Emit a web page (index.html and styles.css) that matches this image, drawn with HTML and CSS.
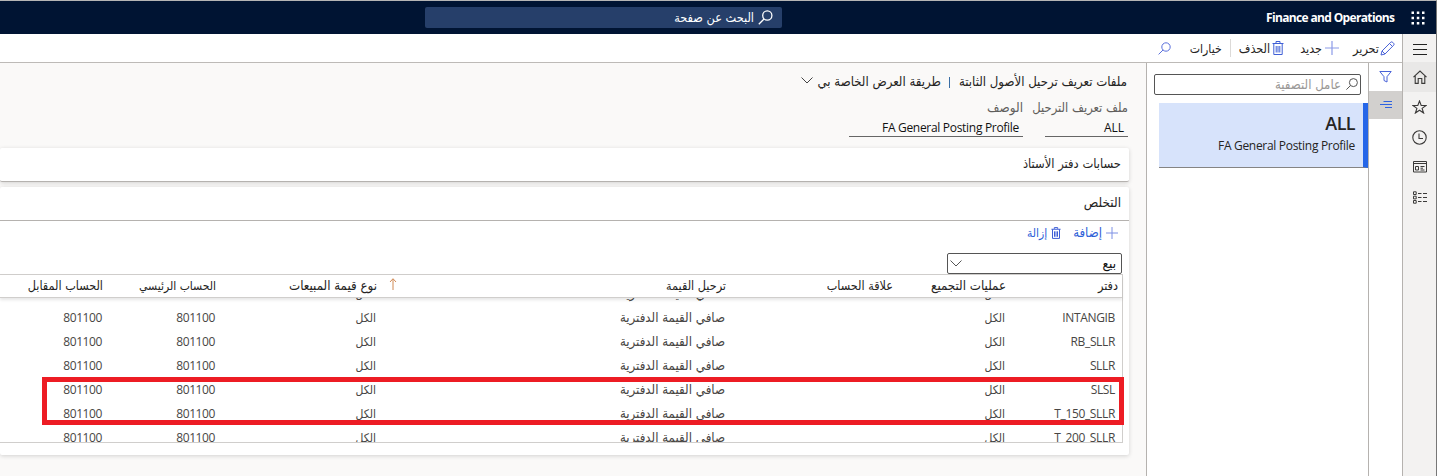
FILE: index.html
```
<!DOCTYPE html>
<html lang="ar" dir="rtl">
<head>
<meta charset="utf-8">
<title>Finance and Operations</title>
<link rel="stylesheet" href="styles.css">
</head>
<body>
<div class="app">
  <header class="topbar">
    <svg class="waffle" width="14" height="14" viewBox="0 0 14 14" fill="#fff"><path d="M.5.5H3V3H.5zM5.800.5h2.500V3H5.800zM11 .5h2.500V3H11zM.5 5.800H3v2.500H.5zM5.800 5.800h2.500v2.500H5.800zM11 5.800h2.500v2.500H11zM.5 11H3v2.500H.5zM5.800 11h2.500v2.500H5.800zM11 11h2.500v2.500H11z"/></svg>
    <span class="brand">Finance and Operations</span>
    <div class="search">
      <svg width="15" height="15" viewBox="0 0 15 15" fill="none" stroke="#fff" stroke-width="1.3"><circle cx="9.3" cy="5.5" r="4.6"/><path d="M6 9L.8 14.2"/></svg>
      <span class="t t-search">البحث عن صفحة</span>
    </div>
  </header>
  <div class="shell">
    <nav class="rail">
      <div class="rail-item menu"><svg width="14" height="11" viewBox="0 0 14 11" stroke="#222" stroke-width="1.1"><path d="M0 .5h14M0 5.5h14M0 10.5h14"/></svg></div>
      <div class="rail-item home"><svg width="14" height="14" viewBox="0 0 14 14" fill="none" stroke="#3b3a39" stroke-width="1.1"><path d="M.5 7.2L7 1l6.500 6.200M2.200 6v7.400h3V8.500h3.600v4.900h3V6"/></svg></div>
      <div class="rail-item"><svg width="15" height="14" viewBox="0 0 15 14" fill="none" stroke="#3b3a39" stroke-width="1.1"><path d="M7.500 1l1.700 4.500h4.800l-3.900 2.900 1.500 4.600-4.100-2.800-4.100 2.800 1.500-4.600L1 5.500h4.800z"/></svg></div>
      <div class="rail-item"><svg width="15" height="15" viewBox="0 0 15 15" fill="none" stroke="#3b3a39" stroke-width="1.1"><circle cx="7.500" cy="7.500" r="6.700"/><path d="M7 3.500v5h4"/></svg></div>
      <div class="rail-item"><svg width="14" height="12" viewBox="0 0 14 12" fill="none" stroke="#3b3a39"><path d="M.5.5h13v10.500H.5zM.5 2.500h13M2.500 5.500h3v3.500h-3zM7.500 5.500h4M7.500 7.200h2.500M7.500 9h4"/></svg></div>
      <div class="rail-item"><svg width="14" height="13" viewBox="0 0 14 13" fill="none" stroke="#3b3a39"><path d="M.5.8h2.700v2.700H.5zM.5 5.200h2.700v2.700H.5zM.5 9.500h2.700v2.700H.5zM5 2.500h3.500M10 2.500h4M5 6.500h3.500M10 6.500h4M5 10.500h3.500M10 10.500h4"/></svg></div>
    </nav>
    <div class="work">
      <div class="actions">
        <svg class="a-pen" width="15" height="15" viewBox="0 0 15 15" fill="none" stroke="#4a63d8"><path d="M1 14l1-4L10.800 1.200q1-.8 2 .2l.8.8q1 1 .1 2L5 13zM9.500 2.500l3 3M2 10l3 3"/></svg>
        <span class="t t-edit">تحرير</span>
        <svg class="a-plus" width="14" height="14" viewBox="0 0 14 14" stroke="#8c9be8" stroke-width="1.2"><path d="M7 0v14M0 7h14"/></svg>
        <span class="t t-new">جديد</span>
        <svg class="a-bin" width="12" height="14" viewBox="0 0 12 14" fill="none" stroke="#3f5fd6"><path d="M.5 2.500h11M4 2V.5h4V2M1.800 2.500v11h8.400v-11M4.200 5v6.500M6 5v6.500M7.800 5v6.500"/></svg>
        <span class="t t-del">الحذف</span>
        <i class="a-sep"></i>
        <span class="t t-opt">خيارات</span>
        <svg class="a-find" width="13" height="13" viewBox="0 0 13 13" fill="none" stroke="#5a70dc"><circle cx="8" cy="5" r="4.200"/><path d="M5 8L.6 12.400"/></svg>
      </div>
      <div class="panes">
        <aside class="strip">
          <div class="strip-filter"><svg width="13" height="12" viewBox="0 0 13 12" fill="none" stroke="#4a63d8"><path d="M.8.5h11.400L8 5.700v5.300l-3-1.500V5.700z"/></svg></div>
          <div class="strip-list"><svg width="12" height="8" viewBox="0 0 12 8" stroke="#2f62e0"><path d="M3.500.5H12M0 3.500h12M5 6.500h7"/></svg></div>
        </aside>
        <section class="list">
          <div class="filter">
            <svg width="12" height="12" viewBox="0 0 12 12" fill="none" stroke="#555"><circle cx="7.400" cy="4.600" r="4"/><path d="M4.600 7.400L.4 11.600"/></svg>
            <span class="t t-filter">عامل التصفية</span>
          </div>
          <div class="profile">
            <span class="profile-name">ALL</span>
            <span class="t-profile">FA General Posting Profile</span>
          </div>
        </section>
        <main class="content">
          <div class="crumbs">
            <span class="t t-c1">ملفات تعريف ترحيل الأصول الثابتة</span>
            <i class="bar"></i>
            <span class="t t-c2">طريقة العرض الخاصة بي</span>
            <svg width="12" height="7" viewBox="0 0 12 7" fill="none" stroke="#444"><path d="M.5.5L6 6 11.500.5"/></svg>
          </div>
          <div class="fields">
            <div class="field f-code"><span class="t t-l1">ملف تعريف الترحيل</span><b class="v">ALL</b></div>
            <div class="field f-desc"><span class="t t-l2">الوصف</span><b class="v"><span class="t-profile">FA General Posting Profile</span></b></div>
          </div>
          <div class="card closed"><span class="t t-h1">حسابات دفتر الأستاذ</span></div>
          <div class="card open">
            <div class="card-head"><span class="t t-h2">التخلص</span></div>
            <div class="card-tools">
              <svg class="c-plus" width="12" height="12" viewBox="0 0 12 12" stroke="#7d90e4"><path d="M6 0v12M0 6h12"/></svg>
              <span class="t t-add">إضافة</span>
              <svg class="c-bin" width="10" height="12" viewBox="0 0 12 14" fill="none" stroke="#3f5fd6" stroke-width="1.200"><path d="M.5 2.500h11M4 2V.5h4V2M1.800 2.500v11h8.400v-11M4.200 5v6.500M6 5v6.500M7.800 5v6.500"/></svg>
              <span class="t t-rem">إزالة</span>
            </div>
            <div class="select"><span class="t t-sale">بيع</span><svg width="12" height="7" viewBox="0 0 12 7" fill="none" stroke="#555"><path d="M.5.5L6 6 11.500.5"/></svg></div>
            <div class="grid">
              <div class="row head">
                <span><span class="t t-g1">دفتر</span></span><span><span class="t t-g2">عمليات التجميع</span></span><span><span class="t t-g3">علاقة الحساب</span></span>
                <span class="sorted"><span class="t t-g4">ترحيل القيمة</span><svg width="8" height="12" viewBox="0 0 8 12" fill="none" stroke="#d08a55"><path d="M4 12V1M1 4l3-3.300L7 4"/></svg></span>
                <span><span class="t t-g5">نوع قيمة المبيعات</span></span><span><span class="t t-g6">الحساب الرئيسي</span></span><span><span class="t t-g7">الحساب المقابل</span></span>
              </div>
              <div class="rows">
                <div class="row"><span></span><span><span class="t t-all">الكل</span></span><span></span><span><span class="t t-net">صافي القيمة الدفترية</span></span><span><span class="t t-all">الكل</span></span><span></span><span></span></div>
                <div class="row"><span class="k">INTANGIB</span><span><span class="t t-all">الكل</span></span><span></span><span><span class="t t-net">صافي القيمة الدفترية</span></span><span><span class="t t-all">الكل</span></span><span class="n">801100</span><span class="n">801100</span></div>
                <div class="row"><span class="k">RB_SLLR</span><span><span class="t t-all">الكل</span></span><span></span><span><span class="t t-net">صافي القيمة الدفترية</span></span><span><span class="t t-all">الكل</span></span><span class="n">801100</span><span class="n">801100</span></div>
                <div class="row"><span class="k">SLLR</span><span><span class="t t-all">الكل</span></span><span></span><span><span class="t t-net">صافي القيمة الدفترية</span></span><span><span class="t t-all">الكل</span></span><span class="n">801100</span><span class="n">801100</span></div>
                <div class="row"><span class="k">SLSL</span><span><span class="t t-all">الكل</span></span><span></span><span><span class="t t-net">صافي القيمة الدفترية</span></span><span><span class="t t-all">الكل</span></span><span class="n">801100</span><span class="n">801100</span></div>
                <div class="row"><span class="k">T_150_SLLR</span><span><span class="t t-all">الكل</span></span><span></span><span><span class="t t-net">صافي القيمة الدفترية</span></span><span><span class="t t-all">الكل</span></span><span class="n">801100</span><span class="n">801100</span></div>
                <div class="row"><span class="k">T_200_SLLR</span><span><span class="t t-all">الكل</span></span><span></span><span><span class="t t-net">صافي القيمة الدفترية</span></span><span><span class="t t-all">الكل</span></span><span class="n">801100</span><span class="n">801100</span></div>
              </div>
              <div class="callout"></div>
            </div>
          </div>
        </main>
      </div>
    </div>
  </div>
</div>
</body>
</html>
```
FILE: styles.css
```
* { box-sizing: border-box; }
body { margin: 0; font: 12px/16px "Open Sans", "DejaVu Sans Condensed", "DejaVu Sans", sans-serif; color: #252423; background: #fff; }
svg { flex: none; display: block; }
.app { height: 476px; display: flex; flex-direction: column; overflow: hidden; border-top: 1px solid #b5b5b5; border-right: 1px solid #777; }
.t { font-family: "DejaVu Sans Condensed", "DejaVu Sans", sans-serif; font-stretch: condensed; display: block; line-height: 16px; white-space: nowrap; flex: none; }

/* Arabic label sizes */
.t-search { font-size: 12.6px; }
.t-edit, .t-new, .t-del { font-size: 12.5px; }
.t-opt { font-size: 12.2px; }
.t-filter, .t-c1, .t-c2, .t-add { font-size: 13.1px; }
.t-l1, .t-h1 { font-size: 12.85px; }
.t-l2, .t-h2, .t-sale { font-size: 13.4px; }
.t-g1, .t-g3, .t-g4, .t-g7 { font-size: 12.5px; }
.t-g2, .t-g5, .t-net { font-size: 13.2px; }

.topbar { flex: none; height: 33px; background: #001433; color: #fff; display: flex; align-items: center; padding-right: 11px; }
.brand { direction: ltr; width: 128px; font-weight: 700; margin-right: 17px; white-space: nowrap; letter-spacing: -0.65px; }
.search { width: 357px; height: 21px; background: #263f6a; border-radius: 2px; margin-right: 484px; padding-right: 9px; display: flex; align-items: center; gap: 4px; }

.shell { flex: 1; display: flex; min-height: 0; }
.rail { flex: none; width: 34px; background: #f3f2f1; border-left: 1px solid #b5b2af; }
.rail-item { height: 30px; display: flex; align-items: center; justify-content: center; }
.rail-item.menu { height: 28px; padding-top: 2px; }
.rail-item.home { background: #e9e8e7; }
.work { flex: 1; min-width: 0; display: flex; flex-direction: column; }
.actions { flex: none; height: 29px; border-bottom: 1px solid #bdbab7; display: flex; align-items: center; padding-right: 7px; }
.actions .t { padding-top: 2px; }
.t-edit { margin-right: 1px; }
.a-plus { margin-right: 14px; }
.t-new { margin-right: 3px; }
.a-bin { margin-right: 16px; }
.t-del { margin-right: 2px; }
.a-sep { width: 1px; height: 18px; background: #dcdad8; margin: 0 8px; }
.a-find { margin-right: 19px; }

.panes { flex: 1; display: flex; min-height: 0; }
.strip { flex: none; width: 34px; border-left: 1px solid #b5b2af; }
.strip-filter, .strip-list { height: 28px; display: flex; align-items: center; justify-content: center; }
.strip-list { background: #d2d0ce; }
.list { flex: none; width: 222px; border-left: 1px solid #b5b2af; }
.filter { width: 207px; height: 21px; margin: 11px 7px 0 0; border: 1px solid #555; border-radius: 2px; display: flex; align-items: center; padding-right: 2px; gap: 5px; color: #9a9896; }
.filter svg { margin-top: -2px; }
.profile { width: 209px; height: 65px; margin-top: 8px; background: #d7e3fb; border-right: 5px solid #2566e8; border-bottom: 1px solid #858483; display: flex; flex-direction: column; padding: 8px 8px 0 0; }
.profile-name { font-size: 18px; line-height: 24px; font-weight: 600; letter-spacing: -0.6px; }
.t-profile { letter-spacing: -0.3px; direction: ltr; white-space: nowrap; }
.profile .t-profile { margin-top: 3px; text-align: right; }

.content { flex: 1; min-width: 0; background: #faf9f8; padding: 10px 17px 0 0; }
.crumbs { display: flex; align-items: center; height: 18px; padding-right: 2px; }
.bar { width: 1px; height: 11px; background: #3a6ea5; margin: 0 9px 0 8px; }
.crumbs svg { margin: -3px 4px 0 0; }
.fields { display: flex; height: 47px; padding-top: 9px; padding-right: 1px; }
.field { display: flex; flex-direction: column; align-items: flex-start; color: #605e5c; }
.f-code { width: 83px; }
.f-desc { width: 174px; margin-right: 22px; }
.v { width: 100%; height: 21px; padding: 4px 4px 0 0; font-weight: 400; color: #111; border-bottom: 1px solid #666; }
.card { background: #fff; border-radius: 2px; box-shadow: 0 1px 4px rgba(0,0,0,.16); margin-top: 5px; }
.closed { height: 34px; margin-top: 10px; border-bottom: 1px solid #b5b2af; padding: 8px 8px 0 0; }
.open { height: 268px; }
.card-head { height: 34px; padding: 8px 8px 0 0; border-bottom: 1px solid #b5b2af; }
.card-tools { height: 32px; padding: 0 11px 8px 0; display: flex; align-items: center; color: #2f5fd8; }
.t-add { margin-right: 4px; }
.c-bin { margin-right: 12px; }
.t-rem { margin-right: 4px; }
.select { width: 175px; height: 21px; margin-right: 7px; border: 1px solid #555; border-radius: 2px; display: flex; align-items: center; justify-content: space-between; padding: 0 5px 0 2px; color: #111; }
.grid { position: relative; margin-right: 6px; height: 169px; border-top: 1px solid #d0cecc; border-right: 1px solid #d0cecc; border-bottom: 1px solid #d0cecc; }
.row { display: grid; grid-template-columns: 112px 113px 167px 349px 161px 113px 1fr; align-items: center; height: 24px; color: #484644; }
.row > span { padding-right: 5px; }
.row > .k { padding-right: 7px; letter-spacing: -0.35px; }
.row > .n { letter-spacing: -0.4px; }
.head { height: 23px; color: #252423; border-bottom: 1px solid #d0cecc; box-shadow: 0 2px 3px rgba(0,0,0,.1); position: relative; background: #fff; z-index: 1; }
.row.head > span { padding-right: 4px; }
.row.head > .sorted { display: flex; justify-content: space-between; padding-left: 8px; }
.rows { height: 144px; overflow: hidden; }
.rows .row:first-child { margin-top: -16px; }
.callout { position: absolute; right: -2px; top: 102px; width: 1082px; height: 48px; border: 5px solid #ed1c24; z-index: 2; }
```
